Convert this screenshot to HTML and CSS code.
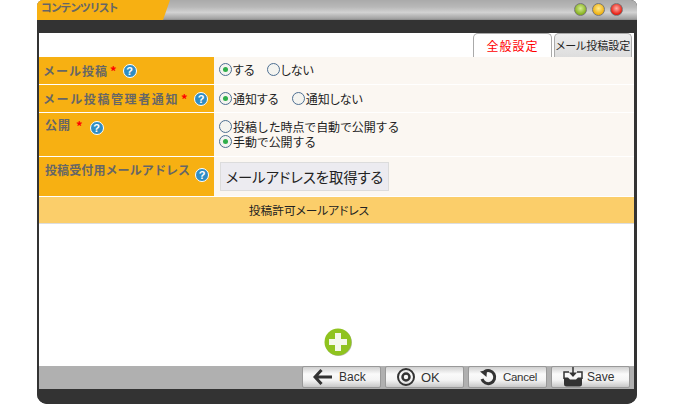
FILE: index.html
```html
<!DOCTYPE html>
<html lang="ja">
<head>
<meta charset="utf-8">
<title>コンテンツリスト</title>
<link rel="stylesheet" href="styles.css">
</head>
<body>
<div class="window">
  <header class="titlebar">
    <div class="title">コンテンツリスト</div>
    <div class="lights">
      <span class="light green"></span>
      <span class="light yellow"></span>
      <span class="light red"></span>
    </div>
  </header>
  <div class="darkbar"></div>
  <main class="content">
    <nav class="tabs">
      <div class="tab active">全般設定</div>
      <div class="tab second">メール投稿設定</div>
    </nav>
    <div class="row r1">
      <div class="label">メール投稿<span class="req">*</span><span class="help">?</span></div>
      <div class="value inline">
        <span class="opt"><span class="radio on"></span>する</span>
        <span class="opt"><span class="radio"></span>しない</span>
      </div>
    </div>
    <div class="row r2">
      <div class="label">メール投稿管理者通知<span class="req">*</span><span class="help">?</span></div>
      <div class="value inline wide">
        <span class="opt"><span class="radio on"></span>通知する</span>
        <span class="opt"><span class="radio"></span>通知しない</span>
      </div>
    </div>
    <div class="row r3">
      <div class="label top">公開<span class="req">*</span><span class="help">?</span></div>
      <div class="value stack">
        <span class="opt"><span class="radio"></span>投稿した時点で自動で公開する</span>
        <span class="opt"><span class="radio on"></span>手動で公開する</span>
      </div>
    </div>
    <div class="row r4">
      <div class="label top4">投稿受付用メールアドレス<span class="help">?</span></div>
      <div class="value btnwrap"><button class="getaddr">メールアドレスを取得する</button></div>
    </div>
    <div class="section">投稿許可メールアドレス</div>
    <div class="addarea">
      <svg class="plus" width="28" height="28" viewBox="0 0 28 28">
        <circle cx="14.500" cy="14.500" r="13.500" fill="#bbb"/>
        <circle cx="14" cy="14" r="13.500" fill="#8fc31f"/>
        <path d="M11 5h6v6h6v6h-6v6h-6v-6H5v-6h6z" fill="#f4f8ea"/>
      </svg>
    </div>
  </main>
  <div class="actions">
    <button class="act"><svg width="20" height="16" viewBox="0 0 20 16"><path d="M8.500 1 2 8l6.500 7M2.500 8H19" fill="none" stroke="#333" stroke-width="3"/></svg><span>Back</span></button>
    <button class="act ok"><svg width="20" height="20" viewBox="0 0 20 20"><circle cx="10" cy="10" r="8" fill="none" stroke="#333" stroke-width="2"/><circle cx="10" cy="10" r="3.500" fill="none" stroke="#333" stroke-width="2.500"/></svg><span>OK</span></button>
    <button class="act cancel"><svg width="18" height="18" viewBox="0 0 18 18"><path d="M5.500 3.800A6.500 6.500 0 1 1 3 11" fill="none" stroke="#333" stroke-width="3"/><path d="M1 3.500 8 2 7.500 9z" fill="#333"/></svg><span>Cancel</span></button>
    <button class="act save"><svg width="20" height="20" viewBox="0 0 20 20"><path d="M1 12V5h5M14 5h5v7M10 0v7" fill="none" stroke="#333" stroke-width="1.500"/><path d="M6 5.500 10 10l4-4.500z" fill="#333"/><path d="M1 10.500h4l2 2h6l2-2h4V17q0 2.500-2.500 2.500h-13Q1 19.500 1 17z" fill="#333"/></svg><span>Save</span></button>
  </div>
  <div class="footer"></div>
</div>
</body>
</html>
```
FILE: styles.css
```css
* { box-sizing: border-box; }
html, body { margin: 0; padding: 0; background: #fff; }
body { width: 675px; height: 404px; overflow: hidden; font-family: "Noto Sans CJK JP", "Liberation Sans", sans-serif; color: #222; font-feature-settings: "palt"; }
.window { margin-left: 37px; width: 600px; height: 404px; display: flex; flex-direction: column; background: #333; border-radius: 6px 6px 10px 10px; overflow: hidden; }

.titlebar { height: 20px; display: flex; justify-content: space-between; align-items: center; background: linear-gradient(#aaa 0, #b8b8b8 35%, #d2d2d2 62%, #a4a4a4 92%, #8a8a8a 100%); }
.title { width: 133px; height: 20px; padding-left: 4px; background: #f7b012; clip-path: polygon(0 0, 100% 0, 126px 100%, 0 100%); font-size: 11px; line-height: 15px; font-weight: 700; color: #666; letter-spacing: -0.500px; }
.lights { display: flex; gap: 5px; padding-right: 14px; padding-bottom: 2px; }
.light { width: 13px; height: 13px; border-radius: 50%; border: 1px solid #777; }
.green { background: radial-gradient(circle at 50% 40%, #d5ee90, #86b020 70%); }
.yellow { background: radial-gradient(circle at 50% 40%, #ffeb90, #eeb010 70%); }
.red { background: radial-gradient(circle at 50% 40%, #ffb0a8, #e81c10 70%); }

.darkbar { height: 13px; background: #333; }

.content { flex: 1; margin: 0 3px 0 2px; background: #fff; display: flex; flex-direction: column; }
.tabs { height: 24px; display: flex; justify-content: flex-end; align-items: flex-end; gap: 2px; padding-right: 2px; }
.tab { height: 24px; font-size: 12px; line-height: 23px; text-align: center; border: 1px solid #aaa; border-bottom: 0; border-radius: 5px 5px 0 0; }
.tab.active { width: 79px; color: #f00; background: #fff; letter-spacing: 1px; font-feature-settings: normal; }
.tab.second { width: 78px; background: linear-gradient(#eee, #ddd); color: #222; font-size: 11px; white-space: nowrap; }

.row { display: flex; background: #fbf7f2; margin-bottom: 1px; }
.r1, .r2 { height: 27px; }
.r3 { height: 43px; }
.r4 { height: 39px; margin-bottom: 1px; }
.label { width: 175px; padding-left: 4px; background: #f7b012; color: #666; font-size: 12px; font-weight: 700; letter-spacing: 1px; display: flex; align-items: center; white-space: nowrap; font-feature-settings: normal; }
.r2 .label { letter-spacing: 1.600px; }
.label.top { align-items: flex-start; padding-top: 3px; padding-left: 6px; }
.label.top4 { align-items: flex-start; padding-top: 4px; padding-left: 6px; letter-spacing: 0.100px; }
.req { color: #f00; margin-left: 2px; font-size: 13px; line-height: 14px; }
.help { width: 14px; height: 14px; margin-left: 5px; margin-top: 1px; flex: none; border-radius: 50%; background: #2f8dc4; border: 1px solid #fff; color: #fff; font: 700 11px/12px "Liberation Sans", sans-serif; letter-spacing: 0; text-align: center; }
.label.top .help { margin-top: 5px; margin-left: 6px; }
.label.top .req { margin-top: 3px; margin-left: 5px; }
.label.top4 .help { margin-top: 7px; }
.value { flex: 1; font-size: 12px; color: #222; padding-left: 5px; }
.value.inline { display: flex; align-items: center; gap: 12px; padding-bottom: 2px; }
.value.inline.wide { padding-bottom: 0; gap: 13px; }
.value.stack { display: flex; flex-direction: column; justify-content: flex-start; padding-top: 6px; line-height: 15px; letter-spacing: -0.120px; font-feature-settings: normal; }
.opt { display: inline-flex; align-items: center; white-space: nowrap; }
.radio { position: relative; width: 13px; height: 13px; margin-right: 1px; flex: none; border-radius: 50%; border: 1.500px solid #4e6f92; background: #f4f4f0; }
.radio.on::after { content: ""; position: absolute; left: 2.500px; top: 2.500px; width: 5px; height: 5px; border-radius: 50%; background: #2fae4a; }
.btnwrap { padding: 5px 0 0 6px; }
.getaddr { width: 169px; height: 29px; padding: 0; background: #ecebf0; border: 1px solid #dcdcdc; font-family: inherit; font-size: 14.300px; line-height: 26px; color: #222; white-space: nowrap; font-feature-settings: "palt"; }

.section { height: 27px; padding-right: 55px; background: #fbce6a; border-bottom: 1px solid #ddd; font-size: 11.700px; line-height: 26px; text-align: center; color: #222; }
.addarea { flex: 1; display: flex; justify-content: center; align-items: flex-end; padding-bottom: 10px; }
.plus { display: block; margin-left: 3px; }

.actions { height: 23px; margin: 0 3px 0 2px; padding: 0 4px 1px 0; background: #b0b0b0; display: flex; justify-content: flex-end; gap: 4px; }
.act { width: 79px; height: 22px; padding: 0 0 0 10px; border: 1px solid #999; border-radius: 2px; background: linear-gradient(#cfcfcf 0, #fafafa 35%, #f4f4f4 65%, #c8c8c8 100%); display: flex; align-items: center; gap: 6px; font: 12px "Liberation Sans", sans-serif; color: #333; }
.act svg { flex: none; }
.ok { gap: 5px; font-size: 13px; }
.cancel { font-size: 11.500px; letter-spacing: -0.300px; }
.save { padding-left: 11px; gap: 4px; }
.footer { height: 15px; background: #333; }
```
